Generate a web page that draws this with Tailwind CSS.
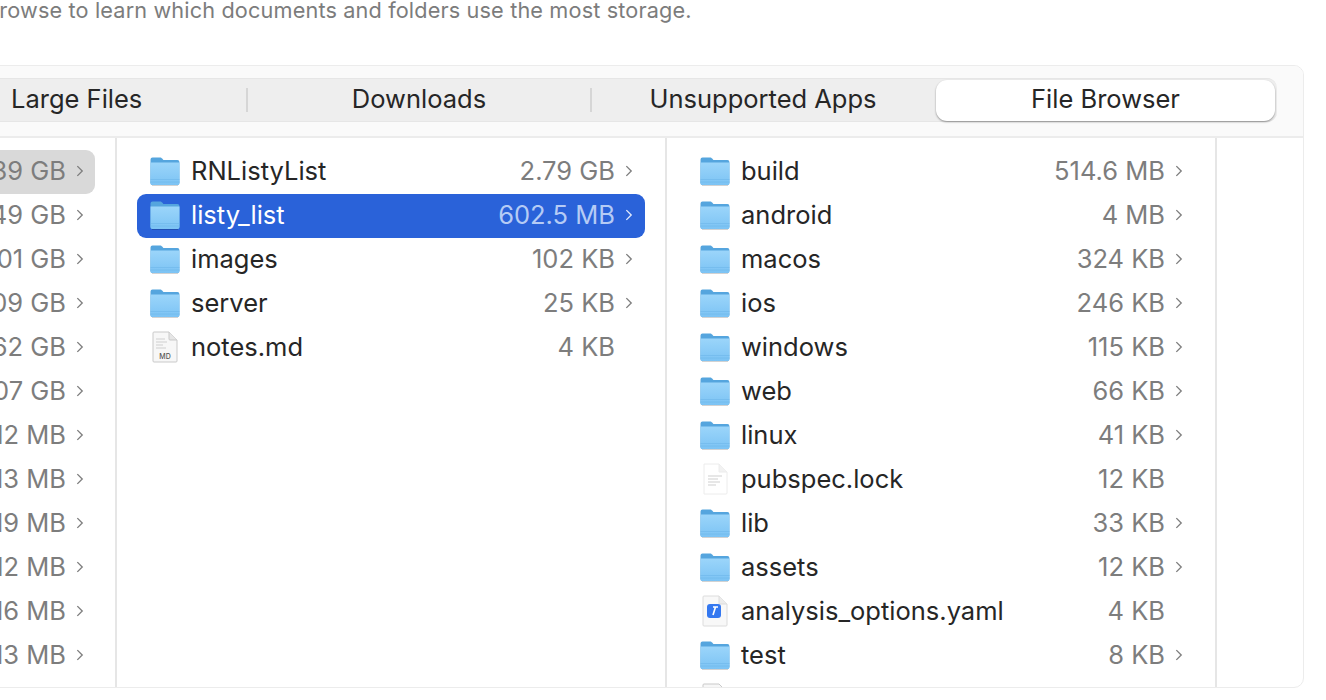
<!doctype html>
<html>
<head>
<meta charset="utf-8">
<script src="https://cdn.jsdelivr.net/npm/@tailwindcss/browser@4"></script>
</head>
<body class="bg-white">
<svg width="0" height="0" class="absolute">
  <defs>
    <linearGradient id="fb" x1="0" y1="0" x2="0" y2="1"><stop offset="0" stop-color="#9bd5fa"/><stop offset="1" stop-color="#7cc3f4"/></linearGradient>
    <symbol id="folder" viewBox="0 0 30 30">
      <path d="M0.5 3.5a2 2 0 0 1 2-2h7.5c1 0 1.500 .4 2.200 1.100l1.200 1.300h14a2 2 0 0 1 2 2v21a2 2 0 0 1-2 2h-25a2 2 0 0 1-2-2z" fill="#55a5de"/>
      <path d="M0.500 6.500h29v20.500a2 2 0 0 1-2 2h-25a2 2 0 0 1-2-2z" fill="url(#fb)"/>
      <path d="M0.500 23.500h29M0.500 26h29" stroke="#68b2e8" stroke-width=".8" opacity=".6"/>
      <path d="M2 29.600h26" stroke="#000" stroke-opacity=".22" stroke-width=".9"/>
    </symbol>
    <symbol id="chev" viewBox="0 0 9 14"><path d="M1.500 1.500L7 7l-5.500 5.500" fill="none" stroke="currentColor" stroke-width="1.500"/></symbol>
  </defs>
</svg>
<div class="w-[1326px] h-[700px] overflow-hidden bg-white font-['Inter','Liberation_Sans',sans-serif] relative">
  <div class="h-[65px] ml-[-15px] text-[21.700px] leading-[21px] text-[#7c7c7c] tracking-[0.14px] whitespace-nowrap">Browse to learn which documents and folders use the most storage.</div>
  <div class="ml-[-20px] w-[1324px] h-[623px] rounded-[10px] border border-[#ececec] overflow-hidden flex flex-col">
    <div class="h-[72px] shrink-0 bg-[#fafafa] border-b-2 border-[#ececec] pt-[12px]">
      <div class="ml-[-1px] w-[1297px] h-[44px] bg-[#eeeeee] rounded-[10px] border-y border-[#e6e6e6] flex items-center text-[25.500px] text-[#262626]">
        <div class="w-[268px] pl-[31px] pb-[2px] h-[24px] border-r-2 border-[#d6d6d6] flex items-center shrink-0">Large Files</div>
        <div class="w-[344px] h-[24px] pb-[2px] border-r-2 border-[#d6d6d6] flex items-center justify-center shrink-0">Downloads</div>
        <div class="w-[344px] h-[24px] pb-[2px] pr-[2px] flex items-center justify-center shrink-0">Unsupported Apps</div>
        <div class="w-[339px] h-[41px] pb-[2px] bg-white rounded-[11px] shadow-[0_1px_2px_rgba(0,0,0,0.4)] flex items-center justify-center shrink-0">File Browser</div>
      </div>
    </div>
    <div class="flex flex-1 min-h-0 text-[25.500px] leading-[44px] text-[#262626]">
      <!-- column 1 -->
      <div class="w-[136px] shrink-0 border-r-2 border-[#e6e6e6] pt-[12px] text-[#7d7d7d] whitespace-nowrap">
        <div class="h-[44px] w-[114px] pb-[2px] bg-[#d9d9d9] rounded-r-[9px] flex items-center justify-end pr-[11px] gap-[10px]"><span>1.39 GB</span><svg class="w-[8px] h-[14px] shrink-0"><use href="#chev"/></svg></div>
        <div class="h-[44px] w-[114px] pb-[2px] flex items-center justify-end pr-[11px] gap-[10px]"><span>8.49 GB</span><svg class="w-[8px] h-[14px] shrink-0"><use href="#chev"/></svg></div>
        <div class="h-[44px] w-[114px] pb-[2px] flex items-center justify-end pr-[11px] gap-[10px]"><span>7.01 GB</span><svg class="w-[8px] h-[14px] shrink-0"><use href="#chev"/></svg></div>
        <div class="h-[44px] w-[114px] pb-[2px] flex items-center justify-end pr-[11px] gap-[10px]"><span>5.09 GB</span><svg class="w-[8px] h-[14px] shrink-0"><use href="#chev"/></svg></div>
        <div class="h-[44px] w-[114px] pb-[2px] flex items-center justify-end pr-[11px] gap-[10px]"><span>3.62 GB</span><svg class="w-[8px] h-[14px] shrink-0"><use href="#chev"/></svg></div>
        <div class="h-[44px] w-[114px] pb-[2px] flex items-center justify-end pr-[11px] gap-[10px]"><span>1.07 GB</span><svg class="w-[8px] h-[14px] shrink-0"><use href="#chev"/></svg></div>
        <div class="h-[44px] w-[114px] pb-[2px] flex items-center justify-end pr-[11px] gap-[10px]"><span>812 MB</span><svg class="w-[8px] h-[14px] shrink-0"><use href="#chev"/></svg></div>
        <div class="h-[44px] w-[114px] pb-[2px] flex items-center justify-end pr-[11px] gap-[10px]"><span>713 MB</span><svg class="w-[8px] h-[14px] shrink-0"><use href="#chev"/></svg></div>
        <div class="h-[44px] w-[114px] pb-[2px] flex items-center justify-end pr-[11px] gap-[10px]"><span>619 MB</span><svg class="w-[8px] h-[14px] shrink-0"><use href="#chev"/></svg></div>
        <div class="h-[44px] w-[114px] pb-[2px] flex items-center justify-end pr-[11px] gap-[10px]"><span>512 MB</span><svg class="w-[8px] h-[14px] shrink-0"><use href="#chev"/></svg></div>
        <div class="h-[44px] w-[114px] pb-[2px] flex items-center justify-end pr-[11px] gap-[10px]"><span>416 MB</span><svg class="w-[8px] h-[14px] shrink-0"><use href="#chev"/></svg></div>
        <div class="h-[44px] w-[114px] pb-[2px] flex items-center justify-end pr-[11px] gap-[10px]"><span>313 MB</span><svg class="w-[8px] h-[14px] shrink-0"><use href="#chev"/></svg></div>
      </div>
      <!-- column 2 -->
      <div class="w-[550px] shrink-0 border-r-2 border-[#e6e6e6] pt-[12px] px-[20px]">
        <div class="h-[44px] w-[508px] pb-[2px] flex items-center pl-[13px] pr-[12px]"><svg class="w-[30px] h-[30px] shrink-0"><use href="#folder"/></svg><span class="ml-[11px] flex-1">RNListyList</span><span class="text-[#7d7d7d]">2.79 GB</span><svg class="w-[8px] h-[14px] ml-[10px] text-[#7d7d7d]"><use href="#chev"/></svg></div>
        <div class="h-[44px] w-[508px] pb-[2px] flex items-center pl-[13px] pr-[12px] bg-[#2a62d9] rounded-[9px] text-white"><svg class="w-[30px] h-[30px] shrink-0"><use href="#folder"/></svg><span class="ml-[11px] flex-1">listy_list</span><span class="text-[#b5cbf5]">602.5 MB</span><svg class="w-[8px] h-[14px] ml-[10px] text-[#e3ebfb]"><use href="#chev"/></svg></div>
        <div class="h-[44px] w-[508px] pb-[2px] flex items-center pl-[13px] pr-[12px]"><svg class="w-[30px] h-[30px] shrink-0"><use href="#folder"/></svg><span class="ml-[11px] flex-1">images</span><span class="text-[#7d7d7d]">102 KB</span><svg class="w-[8px] h-[14px] ml-[10px] text-[#7d7d7d]"><use href="#chev"/></svg></div>
        <div class="h-[44px] w-[508px] pb-[2px] flex items-center pl-[13px] pr-[12px]"><svg class="w-[30px] h-[30px] shrink-0"><use href="#folder"/></svg><span class="ml-[11px] flex-1">server</span><span class="text-[#7d7d7d]">25 KB</span><svg class="w-[8px] h-[14px] ml-[10px] text-[#7d7d7d]"><use href="#chev"/></svg></div>
        <div class="h-[44px] w-[508px] pb-[2px] flex items-center pl-[13px] pr-[30px]">
          <svg class="w-[30px] h-[32px] shrink-0" viewBox="0 0 30 32"><path d="M4 1h15l8 8v21a1 1 0 0 1-1 1H4a1 1 0 0 1-1-1V2a1 1 0 0 1 1-1z" fill="#f7f7f7" stroke="#c9c9c9"/><path d="M19 1v7a1 1 0 0 0 1 1h7" fill="#e6e6e6" stroke="#c9c9c9"/><path d="M6 8h9M6 11h11M6 14h7M6 17h10" stroke="#cfcfcf" stroke-width="1"/><text x="15" y="28" font-size="7" font-weight="500" fill="#555" text-anchor="middle" font-family="Inter">MD</text></svg>
          <span class="ml-[11px] flex-1">notes.md</span><span class="text-[#7d7d7d]">4 KB</span></div>
      </div>
      <!-- column 3 -->
      <div class="w-[550px] shrink-0 border-r-2 border-[#e6e6e6] pt-[12px] px-[20px]">
        <div class="h-[44px] w-[508px] pb-[2px] flex items-center pl-[13px] pr-[12px]"><svg class="w-[30px] h-[30px] shrink-0"><use href="#folder"/></svg><span class="ml-[11px] flex-1">build</span><span class="text-[#7d7d7d]">514.6 MB</span><svg class="w-[8px] h-[14px] ml-[10px] text-[#7d7d7d]"><use href="#chev"/></svg></div>
        <div class="h-[44px] w-[508px] pb-[2px] flex items-center pl-[13px] pr-[12px]"><svg class="w-[30px] h-[30px] shrink-0"><use href="#folder"/></svg><span class="ml-[11px] flex-1">android</span><span class="text-[#7d7d7d]">4 MB</span><svg class="w-[8px] h-[14px] ml-[10px] text-[#7d7d7d]"><use href="#chev"/></svg></div>
        <div class="h-[44px] w-[508px] pb-[2px] flex items-center pl-[13px] pr-[12px]"><svg class="w-[30px] h-[30px] shrink-0"><use href="#folder"/></svg><span class="ml-[11px] flex-1">macos</span><span class="text-[#7d7d7d]">324 KB</span><svg class="w-[8px] h-[14px] ml-[10px] text-[#7d7d7d]"><use href="#chev"/></svg></div>
        <div class="h-[44px] w-[508px] pb-[2px] flex items-center pl-[13px] pr-[12px]"><svg class="w-[30px] h-[30px] shrink-0"><use href="#folder"/></svg><span class="ml-[11px] flex-1">ios</span><span class="text-[#7d7d7d]">246 KB</span><svg class="w-[8px] h-[14px] ml-[10px] text-[#7d7d7d]"><use href="#chev"/></svg></div>
        <div class="h-[44px] w-[508px] pb-[2px] flex items-center pl-[13px] pr-[12px]"><svg class="w-[30px] h-[30px] shrink-0"><use href="#folder"/></svg><span class="ml-[11px] flex-1">windows</span><span class="text-[#7d7d7d]">115 KB</span><svg class="w-[8px] h-[14px] ml-[10px] text-[#7d7d7d]"><use href="#chev"/></svg></div>
        <div class="h-[44px] w-[508px] pb-[2px] flex items-center pl-[13px] pr-[12px]"><svg class="w-[30px] h-[30px] shrink-0"><use href="#folder"/></svg><span class="ml-[11px] flex-1">web</span><span class="text-[#7d7d7d]">66 KB</span><svg class="w-[8px] h-[14px] ml-[10px] text-[#7d7d7d]"><use href="#chev"/></svg></div>
        <div class="h-[44px] w-[508px] pb-[2px] flex items-center pl-[13px] pr-[12px]"><svg class="w-[30px] h-[30px] shrink-0"><use href="#folder"/></svg><span class="ml-[11px] flex-1">linux</span><span class="text-[#7d7d7d]">41 KB</span><svg class="w-[8px] h-[14px] ml-[10px] text-[#7d7d7d]"><use href="#chev"/></svg></div>
        <div class="h-[44px] w-[508px] pb-[2px] flex items-center pl-[13px] pr-[30px]">
          <svg class="w-[30px] h-[32px] shrink-0" viewBox="0 0 30 32"><path d="M4 1h15l8 8v21a1 1 0 0 1-1 1H4V1z" fill="#fff" stroke="#ececec"/><path d="M19 1v8h8" fill="#f2f2f2" stroke="#ececec"/><path d="M8 13h14M8 16h10M8 19h12M8 22h8" stroke="#cfcfcf" stroke-width="1.200"/></svg>
          <span class="ml-[11px] flex-1">pubspec.lock</span><span class="text-[#7d7d7d]">12 KB</span></div>
        <div class="h-[44px] w-[508px] pb-[2px] flex items-center pl-[13px] pr-[12px]"><svg class="w-[30px] h-[30px] shrink-0"><use href="#folder"/></svg><span class="ml-[11px] flex-1">lib</span><span class="text-[#7d7d7d]">33 KB</span><svg class="w-[8px] h-[14px] ml-[10px] text-[#7d7d7d]"><use href="#chev"/></svg></div>
        <div class="h-[44px] w-[508px] pb-[2px] flex items-center pl-[13px] pr-[12px]"><svg class="w-[30px] h-[30px] shrink-0"><use href="#folder"/></svg><span class="ml-[11px] flex-1">assets</span><span class="text-[#7d7d7d]">12 KB</span><svg class="w-[8px] h-[14px] ml-[10px] text-[#7d7d7d]"><use href="#chev"/></svg></div>
        <div class="h-[44px] w-[508px] pb-[2px] flex items-center pl-[13px] pr-[30px]">
          <svg class="w-[30px] h-[32px] shrink-0" viewBox="0 0 30 32"><path d="M4 1h15l8 8v21a1 1 0 0 1-1 1H4a1 1 0 0 1-1-1V2a1 1 0 0 1 1-1z" fill="#f8f8f8" stroke="#dcdcdc"/><path d="M19 1v8h8" fill="#ececec" stroke="#dcdcdc"/><rect x="7" y="9" width="14" height="14" rx="3" fill="#3478f0"/><path d="M15.500 12l-2.500 8M13 12h5" stroke="#fff" stroke-width="1.600" fill="none"/></svg>
          <span class="ml-[11px] flex-1">analysis_options.yaml</span><span class="text-[#7d7d7d]">4 KB</span></div>
        <div class="h-[44px] w-[508px] pb-[2px] flex items-center pl-[13px] pr-[12px]"><svg class="w-[30px] h-[30px] shrink-0"><use href="#folder"/></svg><span class="ml-[11px] flex-1">test</span><span class="text-[#7d7d7d]">8 KB</span><svg class="w-[8px] h-[14px] ml-[10px] text-[#7d7d7d]"><use href="#chev"/></svg></div>
        <div class="h-[44px] w-[508px] pb-[2px] flex items-center pl-[13px] pr-[12px]"><svg class="w-[30px] h-[32px] shrink-0" viewBox="0 0 30 32"><path d="M4 1h15l8 8v21H3V2a1 1 0 0 1 1-1z" fill="#f7f7f7" stroke="#c9c9c9"/></svg></div>
      </div>
    </div>
  </div>
</div>
</body>
</html>
